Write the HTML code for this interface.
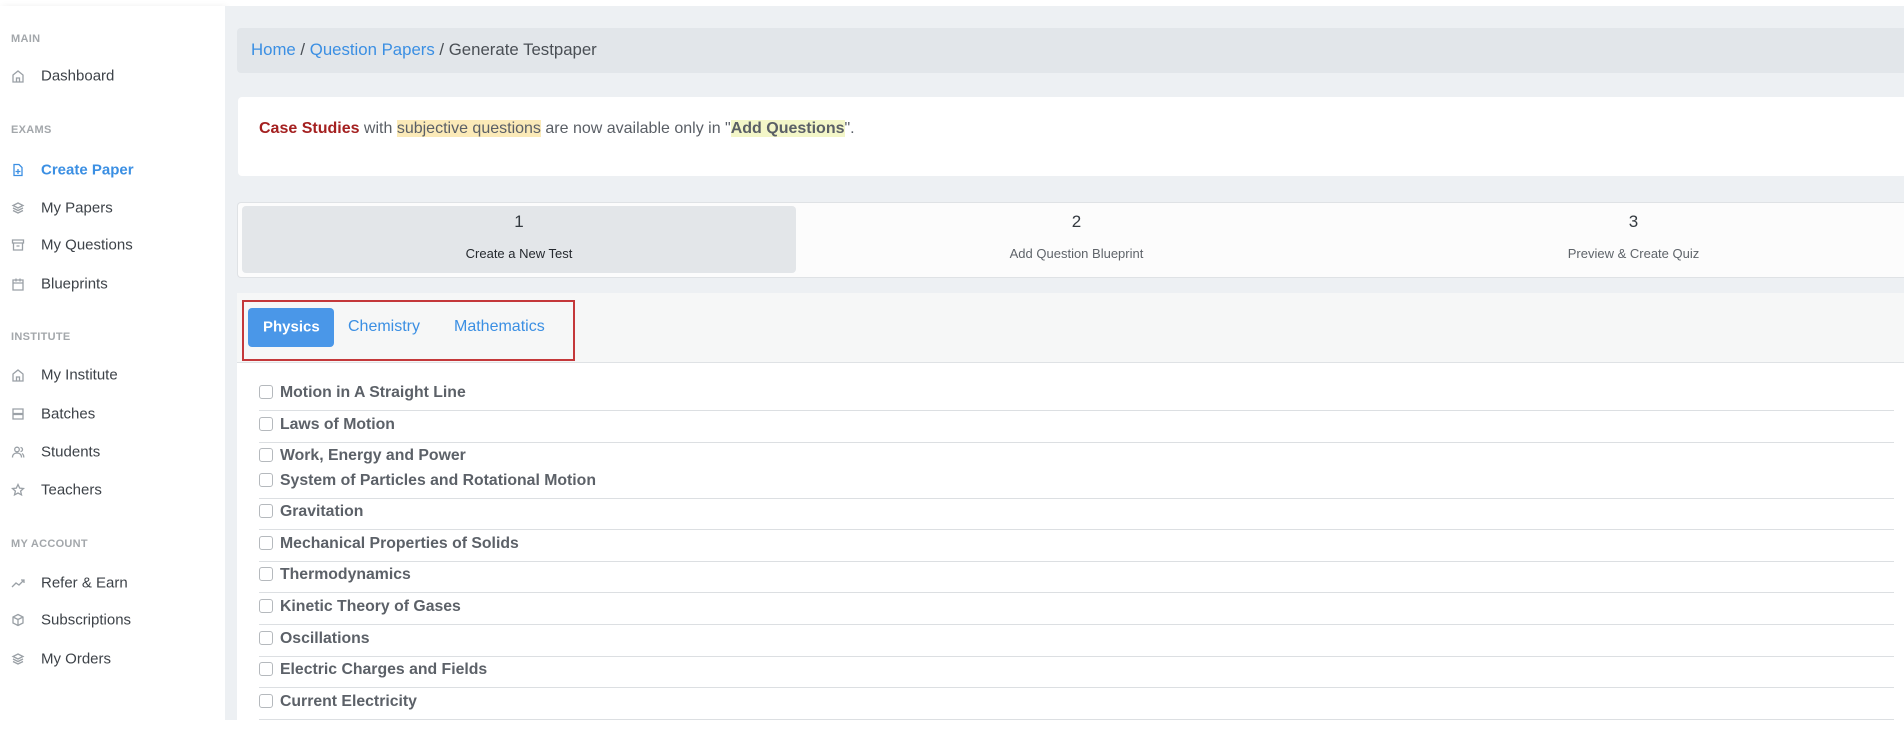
<!DOCTYPE html>
<html><head><meta charset="utf-8"><style>
*{margin:0;padding:0;box-sizing:border-box}
body{width:1904px;height:740px;overflow:hidden;background:#fff;font-family:"Liberation Sans",sans-serif;position:relative}
.abs{position:absolute}
.side{left:0;top:6px;width:225px;height:714px;background:#fff;box-shadow:2px 0 6px rgba(0,0,0,.06)}
.main{left:225px;top:6px;width:1679px;height:714px;background:#edf0f3}
.lab{position:absolute;left:11px;font-size:11px;font-weight:bold;color:#a3a7ab;letter-spacing:.3px}
.it{position:absolute;left:41px;font-size:15px;color:#3d4248;transform:translateY(-50%)}
.ic{position:absolute;left:11px;width:14px;height:14px;transform:translateY(-50%)}
.ic svg{display:block;width:14px;height:14px;fill:none;stroke:#9aa0a6;stroke-width:1.3}
.t{transform:translateY(-50%);white-space:nowrap}
.row{position:absolute;left:259px;width:1635px;font-size:15.8px;font-weight:bold;color:#5c6168}
.cb{display:inline-block;width:14px;height:14px;border:1px solid #b5b9bd;border-radius:3px;vertical-align:-2px;margin-right:7px;background:#fff}
.ln{position:absolute;left:259px;width:1635px;height:1px;background:#dcdfe2}
</style></head><body>
<div class="abs side">
</div>
<div class="lab" style="top:33px">MAIN</div>
<div class="ic" style="top:76px"><svg viewBox="0 0 14 14"><path d="M2 6L7 2l5 4v7H2z M5.5 13V9h3v4"/></svg></div>
<div class="it" style="top:76px">Dashboard</div>
<div class="lab" style="top:124px">EXAMS</div>
<div class="ic" style="top:170px"><svg viewBox="0 0 14 14" style="stroke:#3b8fe3"><path d="M3 1.5h5l3 3v8H3z M7 6v5 M4.5 8.5h5"/></svg></div>
<div class="it" style="top:170px;color:#3b8fe3;font-weight:bold">Create Paper</div>
<div class="ic" style="top:208px"><svg viewBox="0 0 14 14"><path d="M7 2l5 2.5-5 2.5-5-2.5z M2 7l5 2.5L12 7 M2 9.5L7 12l5-2.5"/></svg></div>
<div class="it" style="top:208px">My Papers</div>
<div class="ic" style="top:245px"><svg viewBox="0 0 14 14"><path d="M1.5 2h11v3h-11z M2.5 5v7h9V5 M5.5 8h3"/></svg></div>
<div class="it" style="top:245px">My Questions</div>
<div class="ic" style="top:284px"><svg viewBox="0 0 14 14"><path d="M2 3h10v10H2z M2 6h10 M5 1.5v3 M9 1.5v3"/></svg></div>
<div class="it" style="top:284px">Blueprints</div>
<div class="lab" style="top:331px">INSTITUTE</div>
<div class="ic" style="top:375px"><svg viewBox="0 0 14 14"><path d="M2 6L7 2l5 4v7H2z M5.5 13V9h3v4"/></svg></div>
<div class="it" style="top:375px">My Institute</div>
<div class="ic" style="top:414px"><svg viewBox="0 0 14 14"><path d="M2 2h10v4.5H2z M2 7.5h10V12H2z"/></svg></div>
<div class="it" style="top:414px">Batches</div>
<div class="ic" style="top:452px"><svg viewBox="0 0 14 14"><circle cx="6" cy="4.5" r="2.3"/><path d="M1.5 12.5c0-3 2-4.5 4.5-4.5s4.5 1.5 4.5 4.5 M9.5 2.5a2 2 0 010 4 M11 8.5c1 .6 1.8 2 1.8 4"/></svg></div>
<div class="it" style="top:452px">Students</div>
<div class="ic" style="top:490px"><svg viewBox="0 0 14 14"><path d="M7 1.5l1.7 3.6 3.8.4-2.9 2.6.9 3.8L7 10l-3.5 1.9.9-3.8L1.5 5.5l3.8-.4z"/></svg></div>
<div class="it" style="top:490px">Teachers</div>
<div class="lab" style="top:538px">MY ACCOUNT</div>
<div class="ic" style="top:583px"><svg viewBox="0 0 14 14"><path d="M1 11l4-4 3 2 5-5 M10 4h3v3"/></svg></div>
<div class="it" style="top:583px">Refer &amp; Earn</div>
<div class="ic" style="top:620px"><svg viewBox="0 0 14 14"><path d="M7 1.5l5 2.5v6l-5 2.5-5-2.5V4z M2 4l5 2.5L12 4 M7 6.5v6"/></svg></div>
<div class="it" style="top:620px">Subscriptions</div>
<div class="ic" style="top:659px"><svg viewBox="0 0 14 14"><path d="M7 2l5 2.5-5 2.5-5-2.5z M2 7l5 2.5L12 7 M2 9.5L7 12l5-2.5"/></svg></div>
<div class="it" style="top:659px">My Orders</div>

<div class="abs main"></div>
<div class="abs" style="left:237px;top:28px;width:1667px;height:45px;background:#e2e6ea;border-radius:4px 0 0 4px"></div>
<div class="abs t" style="left:251px;top:50px;font-size:16.8px;color:#4a4f55"><span style="color:#3b8fe3">Home</span> / <span style="color:#3b8fe3">Question Papers</span> / Generate Testpaper</div>

<div class="abs" style="left:238px;top:97px;width:1666px;height:79px;background:#fff;border-radius:4px 0 0 4px"></div>
<div class="abs t" style="left:259px;top:129px;font-size:16px;color:#5a5f66"><b style="color:#a42020">Case Studies</b> with <span style="background:#fbeab8">subjective questions</span> are now available only in "<b style="background:#f3f6c8">Add Questions</b>".</div>

<div class="abs" style="left:237px;top:202px;width:1667px;height:76px;background:#fcfcfc;border:1px solid #dfe2e5;border-right:none;border-radius:4px 0 0 4px"></div>
<div class="abs" style="left:242px;top:206px;width:554px;height:67px;background:#e3e6e9;border-radius:4px"></div>
<div class="abs" style="left:242px;top:212px;width:554px;text-align:center;font-size:17px;color:#343a40">1</div>
<div class="abs" style="left:242px;top:246px;width:554px;text-align:center;font-size:13px;color:#25292e">Create a New Test</div>
<div class="abs" style="left:798px;top:212px;width:557px;text-align:center;font-size:17px;color:#343a40">2</div>
<div class="abs" style="left:798px;top:246px;width:557px;text-align:center;font-size:13px;color:#5f646a">Add Question Blueprint</div>
<div class="abs" style="left:1355px;top:212px;width:557px;text-align:center;font-size:17px;color:#343a40">3</div>
<div class="abs" style="left:1355px;top:246px;width:557px;text-align:center;font-size:13px;color:#5f646a">Preview &amp; Create Quiz</div>

<div class="abs" style="left:237px;top:293px;width:1667px;height:427px;background:#fff"></div>
<div class="abs" style="left:237px;top:293px;width:1667px;height:70px;background:#f6f7f7;border-bottom:1px solid #dfe2e5"></div>
<div class="abs" style="left:242px;top:300px;width:333px;height:61px;border:2px solid #c4383a"></div>
<div class="abs" style="left:248px;top:308px;width:86px;height:39px;background:#4a97e8;border-radius:4px"></div>
<div class="abs t" style="left:263px;top:327px;font-size:15px;font-weight:bold;color:#fff">Physics</div>
<div class="abs t" style="left:348px;top:327px;font-size:16px;color:#3b8fe3">Chemistry</div>
<div class="abs t" style="left:454px;top:327px;font-size:16px;color:#3b8fe3">Mathematics</div>

<div class="row t" style="top:393px"><span class="cb"></span>Motion in A Straight Line</div>
<div class="ln" style="top:410px"></div>
<div class="row t" style="top:425px"><span class="cb"></span>Laws of Motion</div>
<div class="ln" style="top:442px"></div>
<div class="row t" style="top:456px"><span class="cb"></span>Work, Energy and Power</div>
<div class="row t" style="top:481px"><span class="cb"></span>System of Particles and Rotational Motion</div>
<div class="ln" style="top:498px"></div>
<div class="row t" style="top:512px"><span class="cb"></span>Gravitation</div>
<div class="ln" style="top:529px"></div>
<div class="row t" style="top:544px"><span class="cb"></span>Mechanical Properties of Solids</div>
<div class="ln" style="top:561px"></div>
<div class="row t" style="top:575px"><span class="cb"></span>Thermodynamics</div>
<div class="ln" style="top:592px"></div>
<div class="row t" style="top:607px"><span class="cb"></span>Kinetic Theory of Gases</div>
<div class="ln" style="top:624px"></div>
<div class="row t" style="top:639px"><span class="cb"></span>Oscillations</div>
<div class="ln" style="top:656px"></div>
<div class="row t" style="top:670px"><span class="cb"></span>Electric Charges and Fields</div>
<div class="ln" style="top:687px"></div>
<div class="row t" style="top:702px"><span class="cb"></span>Current Electricity</div>
<div class="ln" style="top:719px"></div>
<div class="abs" style="left:0;top:720px;width:1904px;height:20px;background:#fff"></div>
</body></html>
